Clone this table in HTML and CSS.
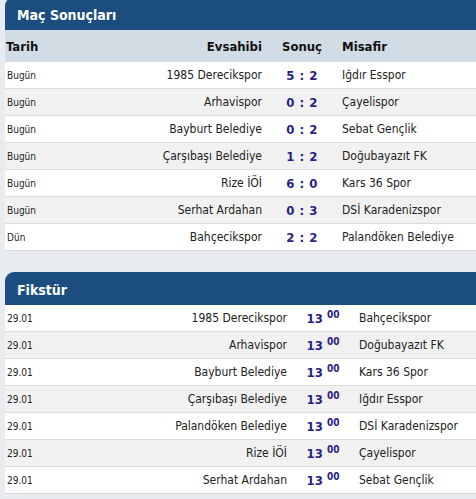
FILE: index.html
```html
<!DOCTYPE html>
<html lang="tr">
<head>
<meta charset="utf-8">
<link rel="stylesheet" href="styles.css">
</head>
<body>
<div class="page">
  <section class="card">
    <h2 class="card-title">Maç Sonuçları</h2>
    <div class="row head results">
      <span class="date">Tarih</span>
      <span class="home">Evsahibi</span>
      <span class="score">Sonuç</span>
      <span class="away">Misafir</span>
    </div>
    <div class="rows">
      <div class="row results"><span class="date">Bugün</span><span class="home">1985 Derecikspor</span><span class="score">5 : 2</span><span class="away">Iğdır Esspor</span></div>
      <div class="row results"><span class="date">Bugün</span><span class="home">Arhavispor</span><span class="score">0 : 2</span><span class="away">Çayelispor</span></div>
      <div class="row results"><span class="date">Bugün</span><span class="home">Bayburt Belediye</span><span class="score">0 : 2</span><span class="away">Sebat Gençlik</span></div>
      <div class="row results"><span class="date">Bugün</span><span class="home">Çarşıbaşı Belediye</span><span class="score">1 : 2</span><span class="away">Doğubayazıt FK</span></div>
      <div class="row results"><span class="date">Bugün</span><span class="home">Rize İÖİ</span><span class="score">6 : 0</span><span class="away">Kars 36 Spor</span></div>
      <div class="row results"><span class="date">Bugün</span><span class="home">Serhat Ardahan</span><span class="score">0 : 3</span><span class="away">DSİ Karadenizspor</span></div>
      <div class="row results"><span class="date">Dün</span><span class="home">Bahçecikspor</span><span class="score">2 : 2</span><span class="away">Palandöken Belediye</span></div>
    </div>
  </section>

  <section class="card">
    <h2 class="card-title">Fikstür</h2>
    <div class="rows">
      <div class="row fixture"><span class="date">29.01</span><span class="home">1985 Derecikspor</span><span class="time">13 <sup>00</sup></span><span class="away">Bahçecikspor</span></div>
      <div class="row fixture"><span class="date">29.01</span><span class="home">Arhavispor</span><span class="time">13 <sup>00</sup></span><span class="away">Doğubayazıt FK</span></div>
      <div class="row fixture"><span class="date">29.01</span><span class="home">Bayburt Belediye</span><span class="time">13 <sup>00</sup></span><span class="away">Kars 36 Spor</span></div>
      <div class="row fixture"><span class="date">29.01</span><span class="home">Çarşıbaşı Belediye</span><span class="time">13 <sup>00</sup></span><span class="away">Iğdır Esspor</span></div>
      <div class="row fixture"><span class="date">29.01</span><span class="home">Palandöken Belediye</span><span class="time">13 <sup>00</sup></span><span class="away">DSİ Karadenizspor</span></div>
      <div class="row fixture"><span class="date">29.01</span><span class="home">Rize İÖİ</span><span class="time">13 <sup>00</sup></span><span class="away">Çayelispor</span></div>
      <div class="row fixture"><span class="date">29.01</span><span class="home">Serhat Ardahan</span><span class="time">13 <sup>00</sup></span><span class="away">Sebat Gençlik</span></div>
    </div>
  </section>
</div>
</body>
</html>
```

FILE: styles.css
```css
html, body {
  margin: 0;
  padding: 0;
  background: #e8ebef;
  overflow: hidden;
}
body {
  font-family: "DejaVu Sans Condensed", "DejaVu Sans", sans-serif;
  font-stretch: condensed;
  color: #222;
}
.page {
  margin-top: -3px;
  padding-left: 5px;
  display: flex;
  flex-direction: column;
  gap: 21px;
}
.card {
  width: 471px;
}
.card-title {
  margin: 0;
  height: 33px;
  box-sizing: border-box;
  padding: 9px 0 0 12px;
  background: #1b4e7f;
  color: #fff;
  font-size: 14px;
  font-weight: bold;
  border-radius: 9px 0 0 0;
  line-height: 18px;
}
.row {
  display: grid;
  align-items: center;
  height: 27px;
  box-sizing: border-box;
  border-bottom: 1px solid #dcdcdc;
  background: #fff;
  font-size: 12px;
}
.rows .row:nth-child(even) {
  background: #f1f1f1;
}
.results {
  grid-template-columns: 100px 157px 80px 1fr;
}
.fixture {
  grid-template-columns: 100px 182px 72px 1fr;
}
.row.head {
  height: 32px;
  background: #d2dce5;
  border-bottom: none;
  font-size: 13px;
  font-weight: bold;
  color: #111;
}
.date {
  padding-left: 2px;
  font-size: 10px;
}
.head .date {
  font-size: 13px;
  padding-left: 1px;
}
.home {
  text-align: right;
}
.score {
  text-align: center;
  font-weight: bold;
  color: #2b2185;
  font-size: 13px;
  letter-spacing: 0.5px;
}
.head .score {
  color: #111;
  letter-spacing: 0;
}
.time {
  text-align: center;
  font-weight: bold;
  color: #2b2185;
  font-size: 13px;
}
.time sup {
  font-size: 10px;
  vertical-align: 5px;
  line-height: 0;
}
```
